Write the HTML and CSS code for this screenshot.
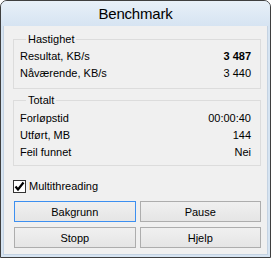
FILE: index.html
```html
<!DOCTYPE html>
<html lang="no">
<head>
    <meta charset="UTF-8">
    <meta name="viewport" content="width=device-width, initial-scale=1.0">
    <link rel="stylesheet" href="styles.css">
    <title>Benchmark</title>
</head>
<body>
    <!-- vindu -->
    <div class="window">
        <div class="titlebar">Benchmark</div>
        <div class="frame">
            <main class="panel">
                <div class="group group-speed">
                    <span class="group-title">Hastighet</span>
                    <div class="row"><span>Resultat, KB/s</span><b>3 487</b></div>
                    <div class="row"><span>Nåværende, KB/s</span><span>3 440</span></div>
                </div>
                <div class="group group-total">
                    <span class="group-title">Totalt</span>
                    <div class="row"><span>Forløpstid</span><span>00:00:40</span></div>
                    <div class="row"><span>Utført, MB</span><span>144</span></div>
                    <div class="row"><span>Feil funnet</span><span>Nei</span></div>
                </div>
                <label class="check">
                    <span class="box">
                        <svg width="11" height="11" viewBox="0 0 11 11"><path d="M1.5 5.5 L4 8.5 L9.5 1.5" fill="none" stroke="#000" stroke-width="2.2"/></svg>
                    </span>
                    Multithreading
                </label>
                <div class="buttons">
                    <button class="button default">Bakgrunn</button>
                    <button class="button">Pause</button>
                    <button class="button">Stopp</button>
                    <button class="button">Hjelp</button>
                </div>
            </main>
        </div>
    </div>
</body>
</html>
```

FILE: styles.css
```css
:root {
    --frame: #d6e4f2;
    --panel: #f0f0f0;
    --group-border: #dcdcdc;
    --btn-border: #adadad;
    --btn-focus: #3c8ff0;
}
body {
    margin: 0;
    background: #fff;
    font-family: "Liberation Sans", Arial, sans-serif;
    font-size: 11px;
    color: #000;
}
.window {
    width: 271px;
    height: 258px;
    box-sizing: border-box;
    border: 1px solid #3f3f3f;
    border-radius: 7px 7px 0 0;
    background: var(--frame);
    display: flex;
    flex-direction: column;
    overflow: hidden;
}
.titlebar {
    height: 25px;
    line-height: 25px;
    text-align: center;
    font-size: 15px;
    letter-spacing: -0.2px;
    background: linear-gradient(#e8f0f8, #d6e4f2);
}
.frame {
    flex: 1;
    padding: 0 2px 2px 2px;
    display: flex;
}
.panel {
    flex: 1;
    background: var(--panel);
    border: 1px solid #c5d3e2;
    border-top: none;
    padding: 13px 6px 0 9px;
}
.group {
    border: 1px solid var(--group-border);
    padding: 0 9px 6px 6px;
}
.group-total {
    margin-top: 11px;
    padding-bottom: 4px;
}
.group-title {
    display: block;
    width: max-content;
    margin: -7px 0 2px 6px;
    padding: 0 2px;
    line-height: 13px;
    background: var(--panel);
}
.group-total .group-title {
    margin-bottom: 3px;
}
.row {
    display: flex;
    justify-content: space-between;
    line-height: 17px;
}
.check {
    display: flex;
    align-items: center;
    gap: 3px;
    margin-top: 13px;
    line-height: 14px;
}
.box {
    width: 11px;
    height: 11px;
    border: 1px solid #333;
    background: #fff;
    display: flex;
}
.buttons {
    display: grid;
    grid-template-columns: 1fr 1fr;
    column-gap: 4px;
    row-gap: 5px;
    margin: 8px 0 0 1px;
}
.button {
    height: 21px;
    border: 1px solid var(--btn-border);
    background: linear-gradient(#f0f0f0, #e5e5e5);
    font-family: inherit;
    font-size: 11px;
    color: #000;
    padding: 0;
}
.button.default {
    border-color: var(--btn-focus);
}
```
